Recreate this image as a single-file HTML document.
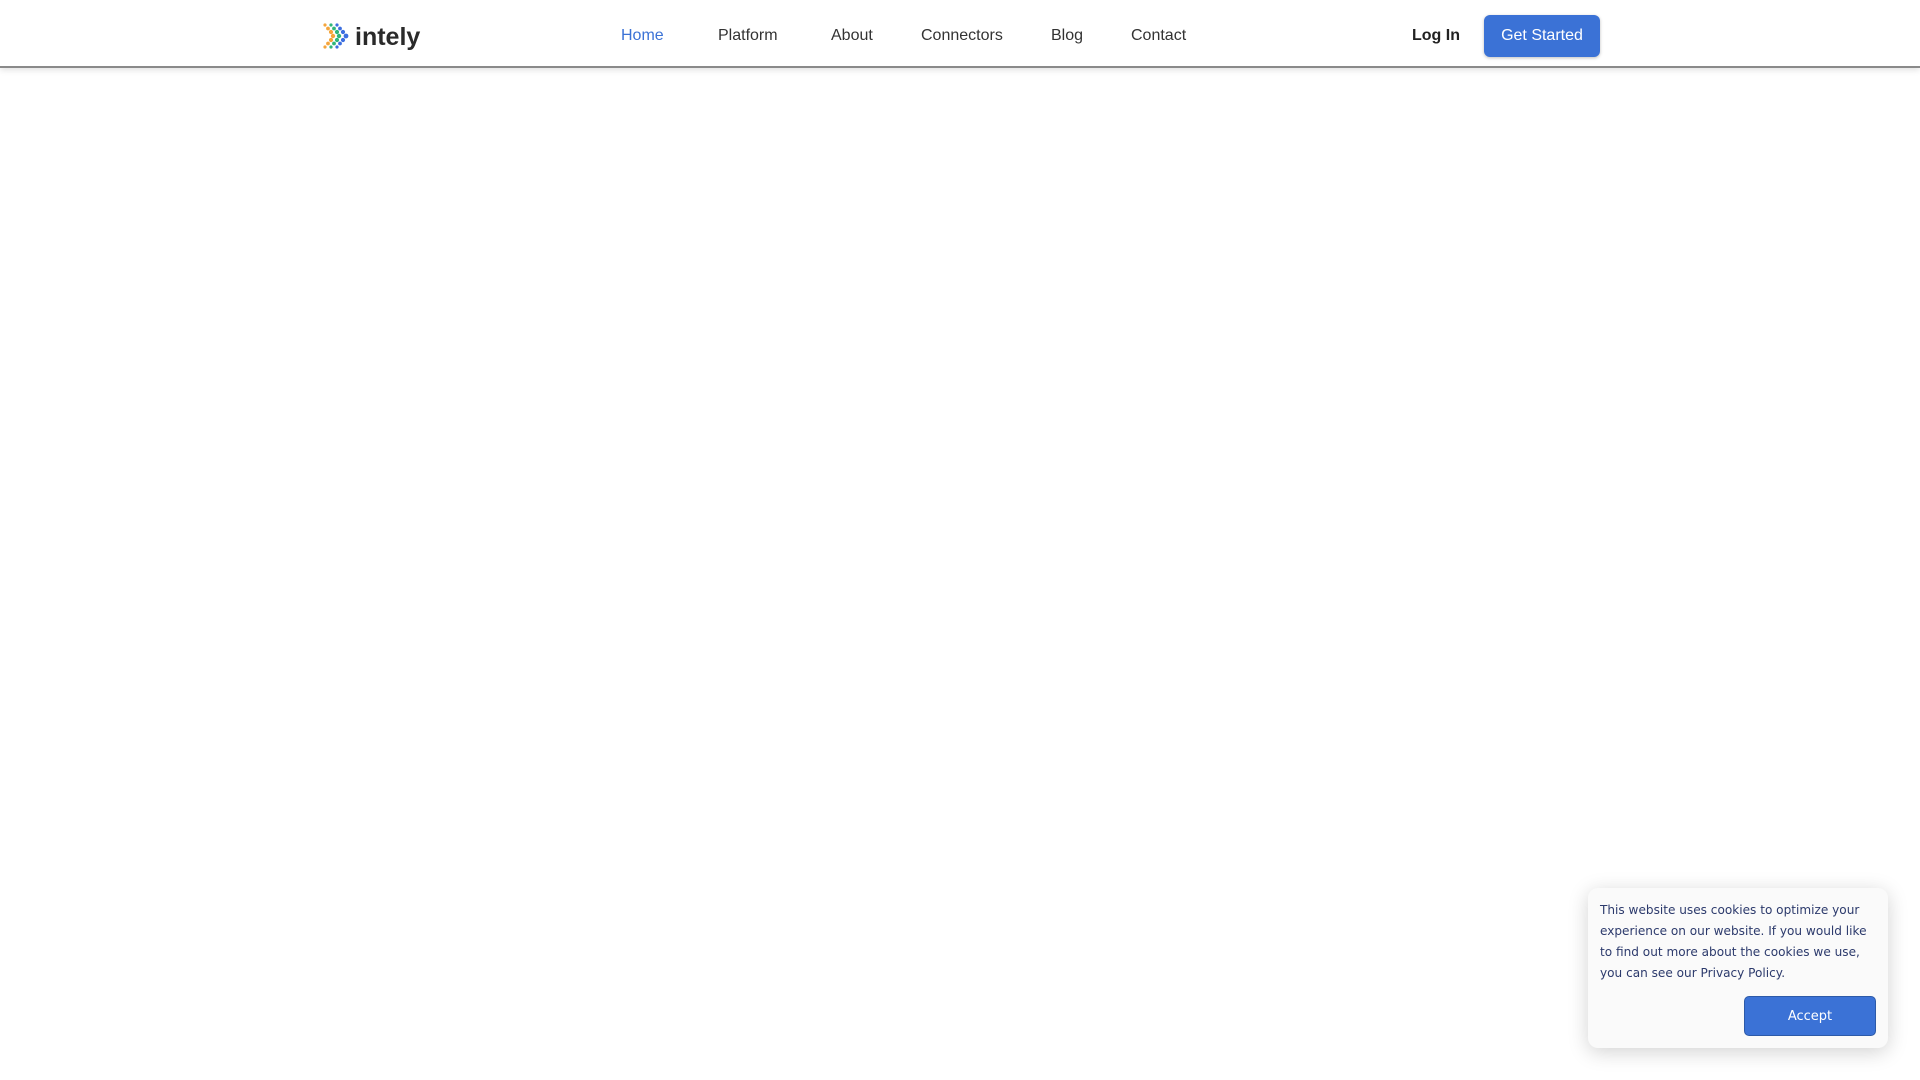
<!DOCTYPE html>
<html><head><meta charset="utf-8"><style>
*{margin:0;padding:0;box-sizing:border-box}
body{width:1920px;height:1080px;background:#fff;font-family:"Liberation Sans",sans-serif;position:relative;overflow:hidden}
.hdr{position:absolute;left:0;top:0;width:1920px;height:68px;border-bottom:2px solid #8a8a8a;box-shadow:0 2px 6px rgba(0,0,0,.12);background:#fff}
.nav{position:absolute;top:26px;font-size:16px;color:#333;line-height:20px}
.logo{position:absolute;left:323px;top:22px}
.logotext{position:absolute;left:355px;top:23px;font-size:25px;font-weight:bold;color:#2a2a2a;font-family:"Liberation Sans",sans-serif}
.btn{position:absolute;left:1484px;top:15px;width:116px;height:42px;background:#3b72d6;border-radius:6px;color:#fff;font-size:16px;text-align:center;line-height:42px;box-shadow:0 1px 3px rgba(0,0,0,.25)}
.cookie{position:absolute;left:1588px;top:888px;width:300px;height:160px;background:#fafafa;border-radius:10px;box-shadow:0 4px 20px rgba(0,0,0,.18);padding:12px 12px}
.cookie p{font-family:"DejaVu Sans",sans-serif;font-size:12.1px;line-height:21px;color:#2c3a6c}
.acc{position:absolute;left:156px;top:108px;width:132px;height:40px;background:#3b72d6;border:1px solid #2d5aa8;border-radius:5px;color:#fff;font-family:"DejaVu Sans",sans-serif;font-size:13px;text-align:center;line-height:40px}
</style></head><body>
<div class="hdr">
<svg class="logo" width="28" height="28" viewBox="0 0 28 28">
<g fill="#f4a53c"><circle cx="2" cy="3" r="1.6"/><circle cx="5" cy="6.5" r="1.9"/><circle cx="8" cy="10" r="2.1"/><circle cx="10" cy="14" r="2.2"/><circle cx="8" cy="18" r="2.1"/><circle cx="5" cy="21.5" r="1.9"/><circle cx="2" cy="25" r="1.6"/></g>
<g fill="#2fb67a"><circle cx="8" cy="3" r="1.6"/><circle cx="11" cy="6.5" r="1.9"/><circle cx="14" cy="10" r="2.1"/><circle cx="16" cy="14" r="2.2"/><circle cx="14" cy="18" r="2.1"/><circle cx="11" cy="21.5" r="1.9"/><circle cx="8" cy="25" r="1.6"/></g>
<g fill="#3c6fe0"><circle cx="14" cy="3" r="1.6"/><circle cx="17" cy="6.5" r="1.9"/><circle cx="20" cy="10" r="2.1"/><circle cx="23" cy="14" r="2.4"/><circle cx="20" cy="18" r="2.1"/><circle cx="17" cy="21.5" r="1.9"/><circle cx="14" cy="25" r="1.6"/></g>
</svg>
<div class="logotext">intely</div>
<div class="nav" style="left:621px;color:#3b72d6">Home</div>
<div class="nav" style="left:718px">Platform</div>
<div class="nav" style="left:831px">About</div>
<div class="nav" style="left:921px">Connectors</div>
<div class="nav" style="left:1051px">Blog</div>
<div class="nav" style="left:1131px">Contact</div>
<div class="nav" style="left:1412px;font-weight:bold;color:#222">Log In</div>
<div class="btn">Get Started</div>
</div>
<div class="cookie">
<p>This website uses cookies to optimize your experience on our website. If you would like to find out more about the cookies we use, you can see our Privacy Policy.</p>
<div class="acc">Accept</div>
</div>
</body></html>
